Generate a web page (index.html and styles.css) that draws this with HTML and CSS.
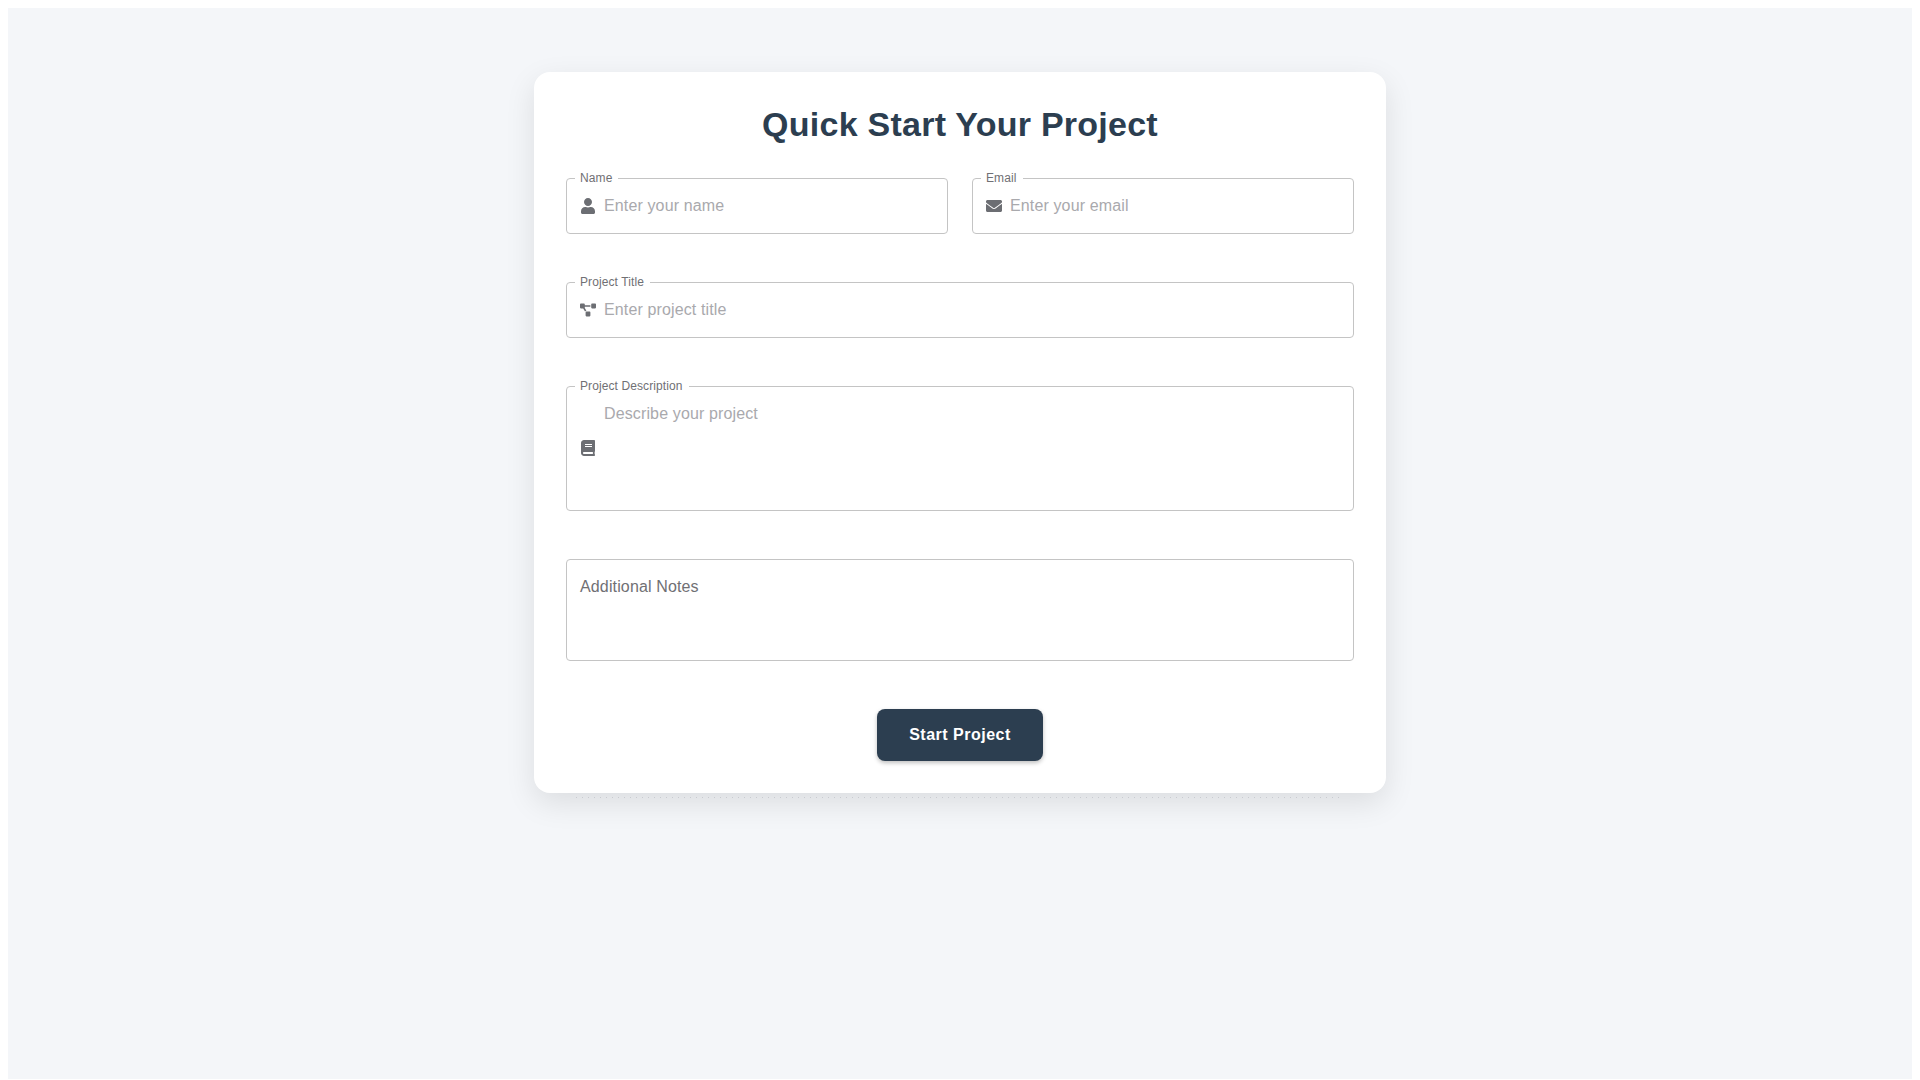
FILE: index.html
```html
<!DOCTYPE html>
<html lang="en">

<head>
    <meta charset="UTF-8">
    <meta name="viewport" content="width=device-width, initial-scale=1.0">
    <title>Quick Start Your Project</title>
    <link rel="stylesheet" href="styles.css">
</head>

<body>
    <div class="page">
        <div class="form-card">
            <h1>Quick Start Your Project</h1>
            <form class="project-form">
                <div class="form-row">
                    <fieldset class="field">
                        <legend>Name</legend>
                        <svg class="field-icon" viewBox="0 0 448 512"><path d="M224 256c70.7 0 128-57.3 128-128S294.7 0 224 0 96 57.3 96 128s57.3 128 128 128zm89.6 32h-16.7c-22.2 10.2-46.9 16-72.9 16s-50.6-5.8-72.9-16h-16.7C60.2 288 0 348.2 0 422.4V464c0 26.5 21.5 48 48 48h352c26.5 0 48-21.5 48-48v-41.6c0-74.2-60.2-134.4-134.4-134.4z"/></svg>
                        <input type="text" class="field-input" placeholder="Enter your name">
                    </fieldset>
                    <fieldset class="field">
                        <legend>Email</legend>
                        <svg class="field-icon" viewBox="0 0 512 512"><path d="M502.3 190.8c3.9-3.1 9.7-.2 9.7 4.7V400c0 26.5-21.5 48-48 48H48c-26.5 0-48-21.5-48-48V195.6c0-5 5.7-7.8 9.7-4.7 22.4 17.4 52.1 39.5 154.1 113.6 21.1 15.4 56.7 47.8 92.2 47.6 35.7.3 72-32.8 92.3-47.6 102-74.1 131.6-96.3 154-113.7zM256 320c23.2.4 56.6-29.2 73.4-41.4 132.7-96.3 142.8-104.7 173.4-128.7 5.8-4.5 9.2-11.5 9.2-18.9v-19c0-26.5-21.5-48-48-48H48C21.5 64 0 85.5 0 112v19c0 7.4 3.4 14.3 9.2 18.9 30.6 23.9 40.7 32.4 173.4 128.7 16.8 12.2 50.2 41.8 73.4 41.4z"/></svg>
                        <input type="email" class="field-input" placeholder="Enter your email">
                    </fieldset>
                </div>

                <fieldset class="field">
                    <legend>Project Title</legend>
                    <svg class="field-icon" viewBox="0 0 640 512"><path d="M384 320H256c-17.67 0-32 14.33-32 32v128c0 17.67 14.33 32 32 32h128c17.67 0 32-14.33 32-32V352c0-17.67-14.33-32-32-32zM192 32c0-17.67-14.33-32-32-32H32C14.33 0 0 14.33 0 32v128c0 17.67 14.33 32 32 32h95.72l73.16 128.04C211.98 300.98 232.4 288 256 288h.28L192 175.51V128h224V64H192V32zM608 0H480c-17.67 0-32 14.33-32 32v128c0 17.67 14.33 32 32 32h128c17.67 0 32-14.33 32-32V32c0-17.67-14.33-32-32-32z"/></svg>
                    <input type="text" class="field-input" placeholder="Enter project title">
                </fieldset>

                <fieldset class="field">
                    <legend>Project Description</legend>
                    <svg class="field-icon" viewBox="0 0 448 512"><path d="M448 360V24c0-13.3-10.7-24-24-24H96C43 0 0 43 0 96v320c0 53 43 96 96 96h328c13.3 0 24-10.7 24-24v-16c0-7.5-3.5-14.3-8.9-18.7-4.2-15.4-4.2-59.3 0-74.7 5.4-4.3 8.9-11.1 8.9-18.6zM128 134c0-3.3 2.7-6 6-6h212c3.3 0 6 2.7 6 6v20c0 3.3-2.7 6-6 6H134c-3.3 0-6-2.7-6-6v-20zm0 64c0-3.3 2.7-6 6-6h212c3.3 0 6 2.7 6 6v20c0 3.3-2.7 6-6 6H134c-3.3 0-6-2.7-6-6v-20zm253.4 250H96c-17.7 0-32-14.3-32-32 0-17.6 14.4-32 32-32h285.4c-1.9 17.1-1.9 46.9 0 64z"/></svg>
                    <textarea class="field-input description-input" placeholder="Describe your project"></textarea>
                </fieldset>

                <div class="notes-box">Additional Notes</div>

                <div class="form-footer">
                    <button type="button" class="start-button">Start Project</button>
                </div>
            </form>
        </div>
    </div>
</body>

</html>
```

FILE: styles.css
```css
:root {
    --text-dark: #2c3e50;
    --text-label: #707074;
    --text-placeholder: #a9a9ad;
    --icon-color: #6c6e73;
    --border-color: #c4c4c4;
    --background-page: #f4f6f9;
}

html,
body {
    height: 100%;
}

body {
    margin: 0;
    padding: 8px 8px 1px;
    box-sizing: border-box;
    background: #fff;
    font-family: "Liberation Sans", Arial, sans-serif;
}

.page {
    height: 100%;
    padding-top: 64px;
    box-sizing: border-box;
    background: var(--background-page);
}

.form-card {
    position: relative;
    width: 852px;
    margin: 0 auto;
    padding: 32px;
    box-sizing: border-box;
    background: #fff;
    border-radius: 16px;
    box-shadow: 0 10px 30px rgba(0, 0, 0, 0.1);
}

/* row of dots just under the card */
.form-card::after {
    content: "";
    position: absolute;
    left: 42px;
    right: 42px;
    bottom: -5px;
    height: 1px;
    background: repeating-linear-gradient(90deg, #c9cbd0 0, #c9cbd0 1px, transparent 1px, transparent 6px);
}

.form-card h1 {
    margin: 0 0 27px;
    color: var(--text-dark);
    font-size: 34px;
    line-height: 40px;
    font-weight: 700;
    letter-spacing: 0.25px;
    text-align: center;
}

.project-form {
    display: flex;
    flex-direction: column;
    gap: 41px;
}

.form-row {
    display: flex;
    gap: 24px;
}

.form-row .field {
    flex: 1;
}

.field {
    display: flex;
    align-items: center;
    gap: 8px;
    min-width: 0;
    margin: 0;
    padding: 0 8px 7px 13px;
    border: 1px solid var(--border-color);
    border-radius: 4px;
}

.field legend {
    margin-left: -5px;
    padding: 0 6px 0 5px;
    color: var(--text-label);
    font-size: 12px;
    line-height: 14px;
    letter-spacing: 0.1px;
}

.field-icon {
    flex: none;
    width: 16px;
    height: 16px;
    fill: var(--icon-color);
}

.field-input {
    flex: 1;
    height: 41px;
    min-width: 0;
    padding: 0;
    border: none;
    outline: none;
    background: transparent;
    color: var(--text-dark);
    font-family: inherit;
    font-size: 16px;
    letter-spacing: 0.13px;
}

.field-input::placeholder {
    color: var(--text-placeholder);
    opacity: 1;
}

.description-input {
    height: 110px;
    padding-top: 12px;
    box-sizing: border-box;
    line-height: 18px;
    resize: none;
}

.notes-box {
    height: 102px;
    margin-top: 7px;
    padding: 18px 13px;
    box-sizing: border-box;
    border: 1px solid var(--border-color);
    border-radius: 4px;
    color: var(--text-label);
    font-size: 16px;
    line-height: 18px;
    letter-spacing: 0.14px;
}

.form-footer {
    display: flex;
    justify-content: center;
    margin-top: 7px;
}

.start-button {
    width: 166px;
    height: 52px;
    border: none;
    border-radius: 8px;
    background: var(--text-dark);
    color: #fff;
    font-family: inherit;
    font-size: 16px;
    font-weight: 700;
    letter-spacing: 0.5px;
    box-shadow: 0 2px 4px rgba(0, 0, 0, 0.25);
    cursor: pointer;
}
```
